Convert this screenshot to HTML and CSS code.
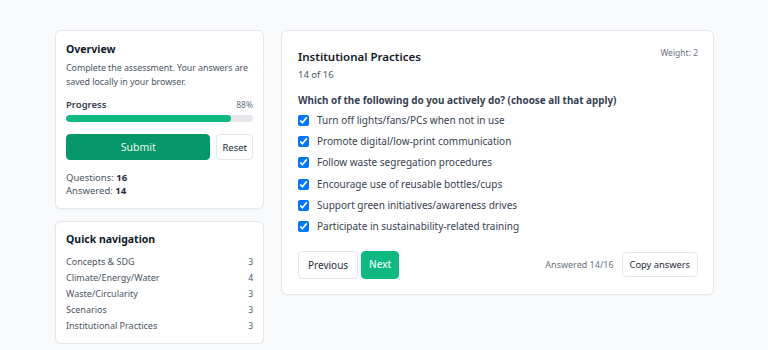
FILE: index.html
```html
<!DOCTYPE html>
<html lang="en">
<head>
  <meta charset="UTF-8" />
  <meta name="viewport" content="width=device-width, initial-scale=1" />
  <title>Sustainability Assessment</title>
  <link rel="stylesheet" href="styles.css">
</head>
<body>
  <div class="layout">
    <aside class="sidebar">
      <div class="card overview">
        <h2>Overview</h2>
        <p class="muted">Complete the assessment. Your answers are saved locally in your browser.</p>
        <div class="progress-head">
          <span class="label">Progress</span>
          <span class="pct">88%</span>
        </div>
        <div class="bar"><div class="bar-fill" style="width: 88%"></div></div>
        <div class="actions">
          <button class="btn btn-submit">Submit</button>
          <button class="btn btn-plain">Reset</button>
        </div>
        <div class="counts">
          <div>Questions: <b>16</b></div>
          <div>Answered: <b>14</b></div>
        </div>
      </div>

      <div class="card nav">
        <h2>Quick navigation</h2>
        <ul class="nav-list">
          <li><span>Concepts &amp; SDG</span><span>3</span></li>
          <li><span>Climate/Energy/Water</span><span>4</span></li>
          <li><span>Waste/Circularity</span><span>3</span></li>
          <li><span>Scenarios</span><span>3</span></li>
          <li><span>Institutional Practices</span><span>3</span></li>
        </ul>
      </div>
    </aside>

    <main class="card question">
      <div class="q-head">
        <div>
          <h1>Institutional Practices</h1>
          <div class="q-count">14 of 16</div>
        </div>
        <div class="weight">Weight: 2</div>
      </div>
      <div class="q-text">Which of the following do you actively do? (choose all that apply)</div>
      <div class="options">
        <label class="option"><input type="checkbox" checked> Turn off lights/fans/PCs when not in use</label>
        <label class="option"><input type="checkbox" checked> Promote digital/low-print communication</label>
        <label class="option"><input type="checkbox" checked> Follow waste segregation procedures</label>
        <label class="option"><input type="checkbox" checked> Encourage use of reusable bottles/cups</label>
        <label class="option"><input type="checkbox" checked> Support green initiatives/awareness drives</label>
        <label class="option"><input type="checkbox" checked> Participate in sustainability-related training</label>
      </div>
      <div class="q-foot">
        <div class="pager">
          <button class="btn btn-plain btn-lg">Previous</button>
          <button class="btn btn-next btn-lg">Next</button>
        </div>
        <div class="foot-right">
          <span class="muted">Answered 14/16</span>
          <button class="btn btn-plain btn-copy">Copy answers</button>
        </div>
      </div>
    </main>
  </div>
</body>
</html>
```

FILE: styles.css
```css
body {
  margin: 0;
  background: #f8fafc;
  font-family: "Noto Sans", "Open Sans", sans-serif;
  color: #1f2937;
  font-size: 10px;
}
.layout {
  width: 659px;
  margin: 30px 0 0 calc(50% - 329px);
  display: grid;
  grid-template-columns: 209px 1fr;
  gap: 17px;
  align-items: start;
}
.sidebar {
  display: flex;
  flex-direction: column;
  gap: 12px;
}
.card {
  background: #fff;
  border: 1px solid #e5e7eb;
  border-radius: 6px;
  box-shadow: 0 1px 2px rgba(0,0,0,0.04);
}
h1, h2, p, ul {
  margin: 0;
}
h2 {
  font-size: 10.5px;
  font-weight: 700;
  line-height: 14px;
  color: #111827;
}
.muted {
  color: #4b5563;
}
.overview {
  padding: 11px 10px 11px;
}
.overview p {
  margin-top: 5px;
  line-height: 14px;
  font-size: 8.9px;
  letter-spacing: -0.05px;
}
.progress-head {
  display: flex;
  justify-content: space-between;
  margin-top: 9px;
  line-height: 14px;
}
.progress-head .label {
  font-weight: 600;
  font-size: 9.5px;
  color: #374151;
}
.progress-head .pct {
  font-size: 8.5px;
  color: #6b7280;
}
.bar {
  margin-top: 3px;
  height: 7px;
  border-radius: 4px;
  background: #e5e7eb;
  overflow: hidden;
}
.bar-fill {
  height: 100%;
  background: #10b981;
  border-radius: 4px;
}
.actions {
  display: flex;
  gap: 6px;
  margin-top: 12px;
}
.btn {
  font-family: inherit;
  font-size: 10px;
  border-radius: 4px;
  border: 1px solid #e5e7eb;
  background: #fff;
  color: #1f2937;
  cursor: pointer;
  padding: 0 8px;
}
.btn-submit {
  flex: 1;
  height: 26px;
  background: #059669;
  border-color: #059669;
  color: #ecfdf5;
  font-size: 10.5px;
}
.actions .btn-plain {
  height: 26px;
  padding: 0 5px;
  font-size: 9.5px;
}
.counts {
  margin-top: 11px;
  line-height: 13px;
  font-size: 9.5px;
  color: #4b5563;
}
.counts b {
  color: #1f2937;
}
.nav {
  padding: 10px 10px 9px;
}
.nav-list {
  list-style: none;
  padding: 0;
  margin-top: 8px;
}
.nav-list li {
  display: flex;
  justify-content: space-between;
  line-height: 16px;
  font-size: 9px;
  color: #4b5563;
}
.nav-list li span:last-child {
  font-size: 8.5px;
}
.question {
  padding: 16px 15px 15px 16px;
}
.q-head {
  display: flex;
  justify-content: space-between;
  align-items: flex-start;
}
h1 {
  font-size: 11.5px;
  font-weight: 600;
  line-height: 20px;
  color: #111827;
}
.q-count {
  margin-top: 1px;
  line-height: 14px;
  color: #4b5563;
  font-size: 9.5px;
}
.weight {
  font-size: 8.5px;
  color: #6b7280;
}
.q-text {
  margin-top: 11px;
  line-height: 14px;
  font-weight: 700;
  font-size: 9.9px;
  color: #374151;
}
.options {
  display: flex;
  flex-direction: column;
  gap: 6.4px;
  margin-top: 5.5px;
}
.option {
  display: flex;
  align-items: center;
  gap: 8px;
  line-height: 15px;
  font-size: 10px;
  color: #374151;
}
.option input {
  width: 11px;
  height: 11px;
  margin: 0;
  accent-color: #0075ff;
}
.q-foot {
  display: flex;
  justify-content: space-between;
  align-items: center;
  margin-top: 16.5px;
}
.pager {
  display: flex;
  gap: 3px;
}
.btn-lg {
  height: 28px;
  padding: 0 9px;
}
.btn-next {
  padding: 0 7px;
  font-size: 9.8px;
  background: #10b981;
  border-color: #10b981;
  color: #ecfdf5;
  font-weight: 500;
}
.foot-right {
  display: flex;
  align-items: center;
  gap: 8px;
}
.foot-right .muted {
  font-size: 9px;
  color: #6b7280;
}
.btn-copy {
  height: 25px;
  padding: 0 7px;
  font-size: 9.3px;
}
```
